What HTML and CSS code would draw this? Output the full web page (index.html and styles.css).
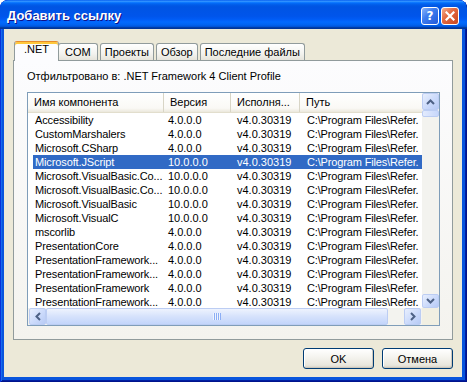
FILE: index.html
```html
<!DOCTYPE html>
<html lang="ru">
<head>
    <meta charset="UTF-8">
    <meta name="viewport" content="width=device-width, initial-scale=1.0">
    <title>Добавить ссылку</title>
    <link rel="stylesheet" href="styles.css">
</head>
<body>
    <div class="window">
        <div class="titlebar">
            <span class="title">Добавить ссылку</span>
            <div class="caption-buttons">
                <span class="cap-btn help">?</span>
                <span class="cap-btn close">
                    <svg width="10" height="10" viewBox="0 0 10 10"><path d="M1.5 1.5L8.5 8.5M8.5 1.5L1.5 8.5" stroke="#fff" stroke-width="2.2" stroke-linecap="square"/></svg>
                </span>
            </div>
        </div>

        <div class="client">
            <div class="tabs">
                <div class="tab active">.NET</div>
                <div class="tab">COM</div>
                <div class="tab">Проекты</div>
                <div class="tab">Обзор</div>
                <div class="tab">Последние файлы</div>
            </div>

            <div class="panel">
                <div class="filter">Отфильтровано в: .NET Framework 4 Client Profile</div>

                <div class="listview">
                    <div class="list-body">
                        <div class="list-header">
                            <div class="hcell">Имя компонента</div>
                            <div class="hcell">Версия</div>
                            <div class="hcell">Исполня...</div>
                            <div class="hcell last">Путь</div>
                        </div>
                        <div class="rows">
                            <div class="row"><span>Accessibility</span><span>4.0.0.0</span><span>v4.0.30319</span><span>C:\Program Files\Refer.</span></div>
                            <div class="row"><span>CustomMarshalers</span><span>4.0.0.0</span><span>v4.0.30319</span><span>C:\Program Files\Refer.</span></div>
                            <div class="row"><span>Microsoft.CSharp</span><span>4.0.0.0</span><span>v4.0.30319</span><span>C:\Program Files\Refer.</span></div>
                            <div class="row selected"><span>Microsoft.JScript</span><span>10.0.0.0</span><span>v4.0.30319</span><span>C:\Program Files\Refer.</span></div>
                            <div class="row"><span>Microsoft.VisualBasic.Co...</span><span>10.0.0.0</span><span>v4.0.30319</span><span>C:\Program Files\Refer.</span></div>
                            <div class="row"><span>Microsoft.VisualBasic.Co...</span><span>10.0.0.0</span><span>v4.0.30319</span><span>C:\Program Files\Refer.</span></div>
                            <div class="row"><span>Microsoft.VisualBasic</span><span>10.0.0.0</span><span>v4.0.30319</span><span>C:\Program Files\Refer.</span></div>
                            <div class="row"><span>Microsoft.VisualC</span><span>10.0.0.0</span><span>v4.0.30319</span><span>C:\Program Files\Refer.</span></div>
                            <div class="row"><span>mscorlib</span><span>4.0.0.0</span><span>v4.0.30319</span><span>C:\Program Files\Refer.</span></div>
                            <div class="row"><span>PresentationCore</span><span>4.0.0.0</span><span>v4.0.30319</span><span>C:\Program Files\Refer.</span></div>
                            <div class="row"><span>PresentationFramework...</span><span>4.0.0.0</span><span>v4.0.30319</span><span>C:\Program Files\Refer.</span></div>
                            <div class="row"><span>PresentationFramework...</span><span>4.0.0.0</span><span>v4.0.30319</span><span>C:\Program Files\Refer.</span></div>
                            <div class="row"><span>PresentationFramework</span><span>4.0.0.0</span><span>v4.0.30319</span><span>C:\Program Files\Refer.</span></div>
                            <div class="row"><span>PresentationFramework...</span><span>4.0.0.0</span><span>v4.0.30319</span><span>C:\Program Files\Refer.</span></div>
                        </div>
                    </div>

                    <div class="vscroll">
                        <span class="sbtn vbtn">
                            <svg width="9" height="6" viewBox="0 0 9 6"><path d="M1 5L4.5 1.5L8 5" fill="none" stroke="#4D6185" stroke-width="2"/></svg>
                        </span>
                        <span class="vthumb"></span>
                        <span class="track"></span>
                        <span class="sbtn vbtn down">
                            <svg width="9" height="6" viewBox="0 0 9 6"><path d="M1 1L4.5 4.5L8 1" fill="none" stroke="#4D6185" stroke-width="2"/></svg>
                        </span>
                    </div>

                    <div class="hscroll">
                        <span class="sbtn hbtn">
                            <svg width="6" height="9" viewBox="0 0 6 9"><path d="M5 1L1.5 4.5L5 8" fill="none" stroke="#4D6185" stroke-width="2"/></svg>
                        </span>
                        <span class="hthumb"><span class="grip"></span></span>
                        <span class="track"></span>
                        <span class="sbtn hbtn">
                            <svg width="6" height="9" viewBox="0 0 6 9"><path d="M1 1L4.5 4.5L1 8" fill="none" stroke="#4D6185" stroke-width="2"/></svg>
                        </span>
                    </div>

                    <div class="corner"></div>
                </div>
            </div>

            <div class="buttons">
                <button class="btn">OK</button>
                <button class="btn">Отмена</button>
            </div>
        </div>
    </div>
</body>
</html>
```

FILE: styles.css
```css
body {
    margin: 0;
    background: #fff;
    font-family: "Liberation Sans", Arial, sans-serif;
    font-size: 11px;
    color: #000;
}
.window {
    width: 467px;
    height: 382px;
    box-sizing: border-box;
    display: flex;
    flex-direction: column;
    background: #0855DD;
    border-radius: 8px 8px 0 0;
    box-shadow: inset 1px 1px #0831D9, inset -1px -1px #00138C, inset 2px 2px #166AEE, inset -2px -2px #001EA0;
    overflow: hidden;
}
.titlebar {
    height: 29px;
    box-sizing: border-box;
    padding: 3px 8px 0 7px;
    display: flex;
    align-items: center;
    justify-content: space-between;
    border-radius: 8px 8px 0 0;
    background: linear-gradient(to bottom, #0058EE 0%, #3593FF 4%, #288EFF 6%, #127DFF 8%, #036FFC 10%, #0262EE 14%, #0057E5 20%, #0054E3 24%, #0055EB 56%, #005BF5 66%, #026AFE 76%, #0062EF 86%, #0052D6 92%, #0040AB 94%, #003092 100%);
}
.title {
    color: #fff;
    font-weight: bold;
    font-size: 13px;
    line-height: 16px;
    text-shadow: 1px 1px #0F1089;
}
.caption-buttons {
    display: flex;
    gap: 2px;
}
.cap-btn {
    width: 18px;
    height: 18px;
    box-sizing: border-box;
    border: 1px solid #fff;
    border-radius: 3px;
    display: flex;
    align-items: center;
    justify-content: center;
    color: #fff;
    font-family: "DejaVu Sans", sans-serif;
    font-weight: bold;
    font-size: 12px;
}
.help {
    background: linear-gradient(135deg, #8DB6FA 0%, #3F7DEF 40%, #2159DA 100%);
}
.close {
    background: linear-gradient(135deg, #F3AE90 0%, #E36B43 40%, #C9461E 100%);
}

.client {
    flex: 1;
    margin: 0 5px 5px 4px;
    padding: 12px 9px 8px 9px;
    background: #ECE9D8;
    display: flex;
    flex-direction: column;
}
.tabs {
    height: 19px;
    padding-left: 1px;
    display: flex;
    align-items: flex-end;
}
.tab {
    height: 17px;
    box-sizing: border-box;
    padding: 0 4px;
    margin-right: 2px;
    line-height: 16px;
    border: 1px solid #919B9C;
    border-bottom: none;
    border-radius: 3px 3px 0 0;
    background: linear-gradient(to bottom, #FFFFFF, #F3F3EF 60%, #E6E4DB);
    white-space: nowrap;
}
.tab.active {
    height: 20px;
    padding: 0 9px;
    margin: 0 -1px -1px 0;
    line-height: 15px;
    position: relative;
    z-index: 1;
    border-top-color: #E68B2C;
    box-shadow: inset 0 2px #FFC83C;
    background: #FCFCFE;
}
.tab.active + .tab {
    padding: 0 6px;
}

.panel {
    flex: 1;
    border: 1px solid #919B9C;
    background: linear-gradient(to bottom, #FCFCFE, #F4F3EE);
    padding: 8px 12px 0 13px;
}
.filter {
    line-height: 14px;
    white-space: nowrap;
}
.listview {
    margin-top: 9px;
    height: 234px;
    box-sizing: border-box;
    border: 1px solid #7F9DB9;
    background: #fff;
    display: grid;
    grid-template-columns: 1fr 17px;
    grid-template-rows: 1fr 17px;
    overflow: hidden;
}
.list-body {
    overflow: hidden;
}
.list-header {
    height: 20px;
    display: grid;
    grid-template-columns: 136px 67px 69px 1fr;
    background: linear-gradient(to bottom, #FFFFFF 0%, #FAF9F5 80%, #EBE8DC 100%);
    border-bottom: 1px solid #E2DECD;
    box-sizing: border-box;
}
.hcell {
    padding-left: 6px;
    line-height: 19px;
    border-right: 1px solid #D8D5C6;
    white-space: nowrap;
    overflow: hidden;
}
.hcell.last {
    border-right: none;
}
.rows {
    margin-left: 5px;
}
.row {
    height: 14px;
    line-height: 14px;
    display: grid;
    grid-template-columns: 131px 67px 69px 1fr;
    white-space: nowrap;
}
.row span {
    overflow: hidden;
}
.row span:nth-child(1) { padding-left: 2px; letter-spacing: -0.12px; }
.row span:nth-child(2) { padding-left: 4px; }
.row span:nth-child(3) { padding-left: 6px; }
.row span:nth-child(4) { padding-left: 7px; letter-spacing: -0.15px; }
.row.selected {
    background: #316AC5;
    color: #fff;
}

.vscroll {
    display: flex;
    flex-direction: column;
    background: #F3F3EF;
}
.hscroll {
    display: flex;
    padding: 0 1px;
    background: #F3F3EF;
}
.track {
    flex: 1;
}
.sbtn {
    box-sizing: border-box;
    display: flex;
    align-items: center;
    justify-content: center;
    border: 1px solid #BCCDF3;
    border-radius: 2px;
    background: linear-gradient(135deg, #E8EFFD 0%, #CBDAFB 55%, #B7CAF5 100%);
}
.vbtn {
    height: 17px;
}
.vbtn.down {
    height: 14px;
}
.hbtn {
    width: 17px;
}
.vthumb {
    height: 7px;
    box-sizing: border-box;
    border: 1px solid #BCCDF3;
    border-radius: 2px;
    background: linear-gradient(to right, #E3EBFD, #C7D7FB);
}
.hthumb {
    width: 342px;
    box-sizing: border-box;
    display: flex;
    align-items: center;
    justify-content: center;
    border: 1px solid #BCCDF3;
    border-radius: 2px;
    background: linear-gradient(to bottom, #EEF3FE 0%, #D6E2FC 50%, #C3D5FB 100%);
}
.grip {
    width: 8px;
    height: 7px;
    background: repeating-linear-gradient(to right, #EEF4FE 0 1px, #8CAEF5 1px 2px);
}
.corner {
    background: #F1EFE2;
}

.buttons {
    margin-top: 8px;
    display: flex;
    justify-content: flex-end;
    gap: 8px;
}
.btn {
    width: 71px;
    height: 21px;
    padding: 0;
    font-family: "Liberation Sans", Arial, sans-serif;
    font-size: 11px;
    color: #000;
    border: 1px solid #003C74;
    border-radius: 3px;
    background: linear-gradient(to bottom, #FFFFFF 0%, #F4F3EE 45%, #E8E6DD 85%, #D6D0C5 100%);
    box-shadow: inset -1px -1px #CEC8BC, inset 1px 1px #FFFFFF;
}
```
